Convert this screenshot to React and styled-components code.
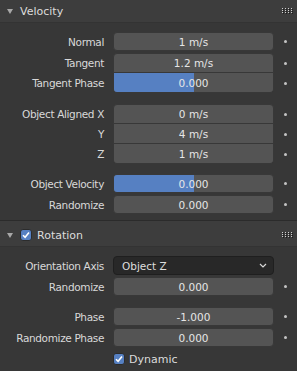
import React from 'react';
import styled, { createGlobalStyle } from 'styled-components';

const GlobalStyle = createGlobalStyle`
  html, body {
    margin: 0;
    padding: 0;
    background: #2b2b2b;
  }
  body {
    font-family: 'DejaVu Sans', 'Liberation Sans', sans-serif;
    overflow: hidden;
  }
`;

const Editor = styled.div`
  width: 297px;
  margin-top: -3px;
  display: flex;
  flex-direction: column;
  gap: 1px;
  background: #2b2b2b;
`;

const PanelHeader = styled.div`
  height: 26px;
  box-sizing: border-box;
  padding: 3px 4px 0 7px;
  display: flex;
  align-items: center;
  background: #3d3d3d;
  border-bottom: 1px solid #333333;
  color: #dcdcdc;
  font-size: 11px;
`;

const Triangle = styled.span`
  width: 0;
  height: 0;
  border-left: 3px solid transparent;
  border-right: 3px solid transparent;
  border-top: 5px solid #a8a8a8;
  margin-right: 7px;
`;

const Title = styled.span`
  flex: 1;
`;

const PanelBody = styled.div`
  background: #373737;
  padding: 9px 0 ${(p) => p.$bottom || 6}px;
  display: flex;
  flex-direction: column;
`;

const Group = styled.div`
  display: flex;
  flex-direction: column;
  gap: ${(p) => (p.$joined ? 0 : 2)}px;
  margin-top: ${(p) => p.$space || 0}px;
`;

const Row = styled.div`
  display: grid;
  grid-template-columns: 113px 161px 23px;
  align-items: center;
  height: ${(p) => (p.$pos && p.$pos !== 'single' ? 20 : 19)}px;
`;

const Label = styled.div`
  text-align: right;
  padding-right: 9px;
  color: #d9d9d9;
  font-size: 10.5px;
  letter-spacing: -0.35px;
  white-space: nowrap;
`;

const radius = {
  single: '4px',
  top: '4px 4px 0 0',
  middle: '0',
  bottom: '0 0 4px 4px',
};

const Field = styled.div`
  position: relative;
  height: 100%;
  box-sizing: border-box;
  background: #545454;
  border: 1px solid #383838;
  border-top-width: ${(p) => (p.$pos === 'middle' || p.$pos === 'bottom' ? 0 : 1)}px;
  border-radius: ${(p) => radius[p.$pos || 'single']};
  overflow: hidden;
  display: flex;
  align-items: center;
  justify-content: center;
  color: #e6e6e6;
  font-size: 10.5px;
`;

const Fill = styled.div`
  position: absolute;
  left: 0;
  top: 0;
  bottom: 0;
  width: ${(p) => p.$amount * 100}%;
  background: #5680c2;
`;

const Value = styled.span`
  position: relative;
`;

const Select = styled.div`
  height: 100%;
  box-sizing: border-box;
  background: #282828;
  border: 1px solid #1f1f1f;
  border-radius: 4px;
  display: flex;
  align-items: center;
  justify-content: space-between;
  padding: 0 6px 0 8px;
  color: #dedede;
  font-size: 10.5px;
`;

const Decorator = styled.div`
  display: flex;
  justify-content: center;
  &::after {
    content: '';
    width: 3px;
    height: 3px;
    border-radius: 50%;
    background: #c4c4c4;
    margin-left: -1px;
  }
`;

const Check = styled.span`
  width: 12px;
  height: 12px;
  border-radius: 3px;
  background: #5680c2;
  border: 1px solid #2c2c2c;
  box-sizing: border-box;
  display: inline-flex;
  align-items: center;
  justify-content: center;
  margin-right: ${(p) => p.$gap || 5}px;
  flex: none;
`;

const CheckRow = styled.div`
  display: flex;
  align-items: center;
  padding-left: 113px;
  height: 20px;
  color: #dcdcdc;
  font-size: 11px;
`;

const CheckMark = () => (
  <svg width="10" height="10" viewBox="0 0 10 10">
    <path d="M2 5.2 L4.1 7.3 L8 2.6" fill="none" stroke="#fff" strokeWidth="1.6" />
  </svg>
);

const Grip = () => (
  <svg width="11" height="7" viewBox="0 0 11 7">
    {[0, 1, 2, 3].map((c) =>
      [0, 1, 2].map((r) => (
        <g key={`${c}-${r}`}>
          <rect x={c * 3 + 1} y={r * 2 + 1} width="1" height="1" fill="#1e1e1e" />
          <rect x={c * 3} y={r * 2} width="1" height="1" fill="#d0d0d0" />
        </g>
      ))
    )}
  </svg>
);

const Chevron = () => (
  <svg width="8" height="5" viewBox="0 0 8 5">
    <path d="M1 1 L4 4 L7 1" fill="none" stroke="#d8d8d8" strokeWidth="1.2" />
  </svg>
);

function NumRow({ label, value, pos, fill }) {
  return (
    <Row $pos={pos}>
      <Label>{label}</Label>
      <Field $pos={pos}>
        {fill !== undefined && <Fill $amount={fill} />}
        <Value>{value}</Value>
      </Field>
      <Decorator />
    </Row>
  );
}

export default function App() {
  return (
    <>
      <GlobalStyle />
      <Editor>
        <section>
          <PanelHeader>
            <Triangle />
            <Title>Velocity</Title>
            <Grip />
          </PanelHeader>
          <PanelBody>
            <Group>
              <NumRow label="Normal" value="1 m/s" />
            </Group>
            <Group $joined $space={2}>
              <NumRow label="Tangent" value="1.2 m/s" pos="top" />
              <NumRow label="Tangent Phase" value="0.000" pos="bottom" fill={0.5} />
            </Group>
            <Group $joined $space={11}>
              <NumRow label="Object Aligned X" value="0 m/s" pos="top" />
              <NumRow label="Y" value="4 m/s" pos="middle" />
              <NumRow label="Z" value="1 m/s" pos="bottom" />
            </Group>
            <Group $space={10}>
              <NumRow label="Object Velocity" value="0.000" fill={0.5} />
              <NumRow label="Randomize" value="0.000" />
            </Group>
          </PanelBody>
        </section>
        <section>
          <PanelHeader>
            <Triangle />
            <Check $gap={5}>
              <CheckMark />
            </Check>
            <Title>Rotation</Title>
            <Grip />
          </PanelHeader>
          <PanelBody $bottom={10}>
            <Group>
              <Row>
                <Label>Orientation Axis</Label>
                <Select>
                  <span>Object Z</span>
                  <Chevron />
                </Select>
              </Row>
              <NumRow label="Randomize" value="0.000" />
            </Group>
            <Group $space={11}>
              <NumRow label="Phase" value="-1.000" />
              <NumRow label="Randomize Phase" value="0.000" />
              <CheckRow>
                <Check $gap={4}>
                  <CheckMark />
                </Check>
                Dynamic
              </CheckRow>
            </Group>
          </PanelBody>
        </section>
      </Editor>
    </>
  );
}
